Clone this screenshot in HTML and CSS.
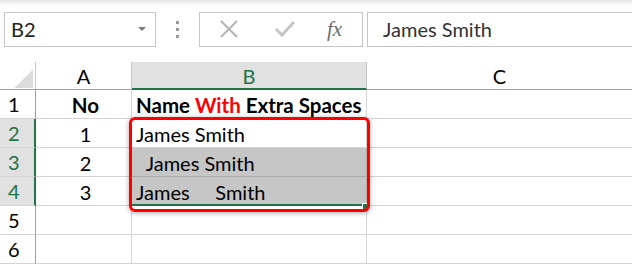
FILE: index.html
```html
<!DOCTYPE html>
<html lang="en">
<head>
  <meta charset="UTF-8">
  <title>Extra Spaces</title>
  <link rel="stylesheet" href="styles.css">
</head>
<body>
  <div class="toolbar">
    <div class="name-box">
      <span>B2</span>
      <span class="arrow"></span>
    </div>
    <div class="dots"><i></i><i></i><i></i></div>
    <div class="buttons">
      <svg width="20" height="20" viewBox="0 0 20 20"><path d="M2 2 L18 18 M18 2 L2 18" stroke="#b4b4b4" stroke-width="2" fill="none"/></svg>
      <svg width="22" height="20" viewBox="0 0 22 20"><path d="M2 10 L8 16 L20 3" stroke="#c4c4c4" stroke-width="3" fill="none"/></svg>
      <span class="fx">fx</span>
    </div>
    <div class="formula">James Smith</div>
  </div>

  <div class="sheet">
    <div class="grid">
      <div class="corner"></div>
      <div class="colhead">A</div>
      <div class="colhead sel">B</div>
      <div class="colhead last">C</div>

      <div class="rowhead">1</div>
      <div class="cell num bold">No</div>
      <div class="cell bold">Name <span class="red">With</span> Extra Spaces</div>
      <div class="cell last"></div>

      <div class="rowhead sel">2</div>
      <div class="cell num">1</div>
      <div class="cell">James Smith</div>
      <div class="cell last"></div>

      <div class="rowhead sel">3</div>
      <div class="cell num">2</div>
      <div class="cell picked">  James Smith</div>
      <div class="cell last"></div>

      <div class="rowhead sel">4</div>
      <div class="cell num">3</div>
      <div class="cell picked bottom">James     Smith</div>
      <div class="cell last"></div>

      <div class="rowhead">5</div>
      <div class="cell num"></div>
      <div class="cell"></div>
      <div class="cell last"></div>

      <div class="rowhead">6</div>
      <div class="cell num"></div>
      <div class="cell"></div>
      <div class="cell last"></div>
    </div>

    <div class="handle"></div>
    <div class="callout"></div>
  </div>
</body>
</html>
```

FILE: styles.css
```css
body {
  margin: 0;
  width: 632px;
  height: 265px;
  overflow: hidden;
  background: #fff;
  font-family: Lato, "Open Sans", sans-serif;
}

.toolbar {
  display: flex;
  align-items: center;
  height: 62px;
  padding: 0 0 4px 4px;
  box-sizing: border-box;
  background: linear-gradient(#e6e6e6, #fff 6px);
}

.name-box {
  display: flex;
  align-items: center;
  justify-content: space-between;
  width: 152px;
  height: 35px;
  box-sizing: border-box;
  border: 1px solid #c6c6c6;
  padding: 0 9px 0 6px;
  font-size: 20px;
  color: #222;
}

.arrow {
  border-left: 4px solid transparent;
  border-right: 4px solid transparent;
  border-top: 4px solid #7a7a7a;
}

.dots {
  display: flex;
  flex-direction: column;
  gap: 4px;
  margin: 0 20px 0 20px;
}

.dots i {
  width: 3px;
  height: 3px;
  background: #9a9a9a;
}

.buttons {
  display: flex;
  align-items: center;
  width: 164px;
  height: 35px;
  box-sizing: border-box;
  border: 1px solid #c6c6c6;
  padding-left: 19px;
  gap: 35px;
}

.fx {
  font-family: "Liberation Serif", serif;
  font-style: italic;
  font-size: 21px;
  color: #6e6e6e;
  margin-left: -4px;
}

.formula {
  flex: 1;
  height: 35px;
  box-sizing: border-box;
  margin-left: 4px;
  border: 1px solid #c6c6c6;
  border-right: none;
  padding: 4px 0 0 15px;
  font-size: 20px;
  color: #333;
}

.sheet {
  position: relative;
}

.grid {
  display: grid;
  grid-template-columns: 36px 96px 235px 265px;
  grid-template-rows: 28px repeat(6, 29px);
}

.grid > div {
  box-sizing: border-box;
  border-right: 1px solid #d4d4d4;
  border-bottom: 1px solid #d4d4d4;
  font-size: 20px;
  white-space: pre;
  color: #000;
}

.corner {
  background: linear-gradient(135deg, #fff 55%, #dcdcdc 55%) no-repeat 11px 6px / 22px 20px;
}

.grid > .corner,
.grid > .colhead {
  border-bottom: 1px solid #9e9e9e;
  border-right-color: #c8c8c8;
}

.colhead {
  text-align: center;
  line-height: 28px;
  color: #444;
}

.colhead.sel {
  background: #e1e1e1;
  color: #217346;
}

.grid > .colhead.sel {
  border-bottom: 2px solid #217346;
}

.rowhead {
  padding-left: 8px;
  line-height: 29px;
  color: #444;
}

.grid > .rowhead {
  border-right-color: #9e9e9e;
}

.rowhead.sel {
  background: #e1e1e1;
  color: #217346;
}

.grid > .rowhead.sel {
  border-right: 2px solid #217346;
}

.cell {
  padding-left: 4px;
  line-height: 30px;
}

.num {
  text-align: center;
}

.grid > .bold {
  font-weight: bold;
  font-size: 20.5px;
}

.red {
  color: #ff0000;
}

.grid > .picked {
  background: #c6c6c6;
  border-bottom-color: #ababab;
  border-right-color: #ababab;
}

.grid > .bottom {
  border-bottom: 2px solid #217346;
}

.grid > .last {
  border-right: none;
}

.handle {
  position: absolute;
  left: 362px;
  top: 141px;
  width: 5px;
  height: 5px;
  background: #217346;
  border: 1px solid #fff;
}

.callout {
  position: absolute;
  left: 129px;
  top: 55px;
  width: 241px;
  height: 95px;
  box-sizing: border-box;
  border: 3px solid #ff0000;
  border-radius: 6px;
  box-shadow: 0 1px 5px rgba(0, 0, 0, 0.35);
}
```
